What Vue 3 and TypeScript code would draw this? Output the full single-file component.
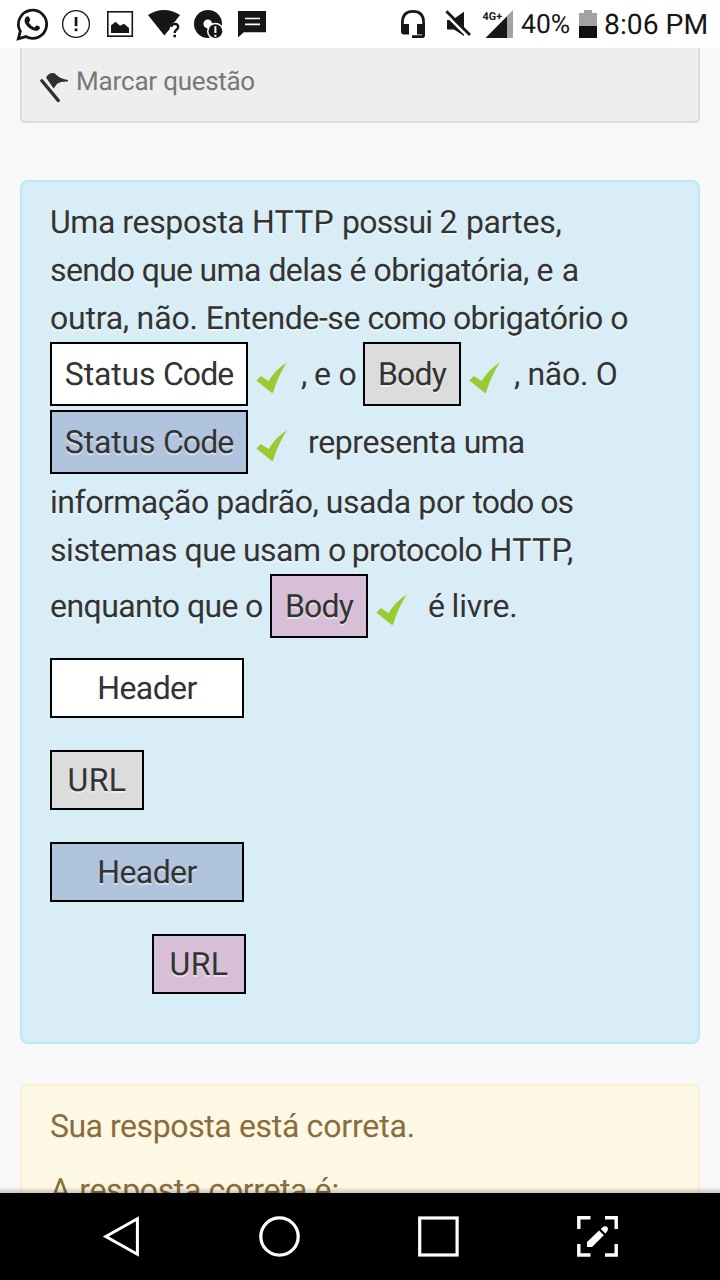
<script setup lang="ts">
import { defineComponent, h } from 'vue'

interface Choice {
  words: Word[]
  tone: string
  size: string
}

// A word (with its trailing space) and the advance it takes on the line.
type Word = [text: string, advance: number]

const pen = document.createElement('canvas').getContext('2d')!

function natural(text: string, size: number): number {
  pen.font = `${size}px Roboto, "Liberation Sans", sans-serif`
  return pen.measureText(text).width
}

// Sets each word to its advance by spreading the difference over its letters.
const Words = defineComponent({
  props: { words: { type: Array, required: true }, size: { type: Number, default: 32 } },
  setup(props) {
    return () =>
      h(
        'span',
        { style: { whiteSpace: 'pre' } },
        (props.words as Word[]).map(([text, advance]) =>
          h(
            'span',
            {
              style: {
                display: 'inline-block',
                textAlign: 'left',
                width: `${advance}px`,
                letterSpacing: `${((advance - natural(text, props.size)) / text.length).toFixed(3)}px`,
              },
            },
            text,
          ),
        ),
      )
  },
})

const intro: Word[][] = [
  [['Uma ', 72.3], ['resposta ', 129.7], ['HTTP ', 90.1], ['possui ', 97.5], ['2 ', 26.3], ['partes,', 95.6]],
  [['sendo ', 91.8], ['que ', 57.7], ['uma ', 68.9], ['delas ', 81], ['é ', 24], ['obrigatória, ', 163], ['e ', 25.4], ['a', 17]],
  [['outra, ', 86.6], ['não. ', 69.2], ['Entende-se ', 161.8], ['como ', 85.3], ['obrigatório ', 157.4], ['o', 17.7]],
]
const middle: Word[][] = [
  [['informação ', 166.2], ['padrão, ', 109.5], ['usada ', 92.5], ['por ', 54.3], ['todo ', 67.8], ['os', 32.7]],
  [['sistemas ', 134.6], ['que ', 58.4], ['usam ', 84.9], ['o ', 23.8], ['protocolo ', 137.8], ['HTTP,', 84.1]],
]
const statusCode: Word[] = [['Status ', 98.2], ['Code', 70.2]]
const body: Word[] = [['Body', 68]]
const joint: Word[] = [[', ', 13.1], ['e ', 24.3], ['o', 18]]
const notO: Word[] = [[', ', 13.4], ['não. ', 68.4], ['O', 21.5]]
const represents: Word[] = [['representa ', 155.8], ['uma', 60.5]]
const meanwhile: Word[] = [['enquanto ', 136.9], ['que ', 58.1], ['o', 18]]
const free: Word[] = [['é ', 23.6], ['livre.', 66]]
const header: Word[] = [['Header', 99.5]]
const url: Word[] = [['URL', 59]]

const choices: Choice[] = [
  { words: header, tone: 'white', size: 'wide' },
  { words: url, tone: 'grey', size: 'narrow' },
  { words: header, tone: 'blue', size: 'wide' },
  { words: url, tone: 'pink', size: 'narrow shifted' },
]

const feedback: Word[][] = [
  [['Sua ', 59.9], ['resposta ', 129], ['está ', 67.7], ['correta.', 108.4]],
  [['A ', 29.2], ['resposta ', 129.4], ['correta ', 106], ['é:', 24.4]],
]
const mark: Word[] = [['Marcar ', 87.3], ['questão', 91.5]]

const tick = 'M0.3 18.6 L4.9 14 L12.6 19 Q19.5 7.5 31 0.3 Q22 14 17 30.7 H15.6 Z'
</script>

<template>
  <div class="screen">
    <header class="status">
      <svg class="left-icons" width="280" height="48" viewBox="0 0 280 48">
        <g fill="none" stroke="#161616">
          <path d="M18.3 38.8 L20.3 31.2 A14.1 14.1 0 1 1 25.8 36.6 Z" stroke-width="2.8" />
          <circle cx="76" cy="24" r="13.4" stroke-width="1.3" />
          <rect x="107.8" y="11.8" width="24.5" height="24.4" stroke-width="1.6" />
        </g>
        <g fill="#161616">
          <path d="M24.7 19.5 Q25.3 16.6 27.5 16.2 Q28.5 16 29.1 17.3 L30.2 19.8 Q30.5 20.6 28.7 22.6 Q30.8 26.2 34.5 27.6 L36.4 25.6 Q37 25.2 39.7 26.8 Q40.3 27.5 39.5 29 Q37.9 31.2 35.3 30.8 Q28.3 29.1 25 22.9 Q24.3 21.3 24.7 19.5 Z" />
          <rect x="74.7" y="17" width="2.7" height="9.2" />
          <rect x="74.7" y="28.4" width="2.7" height="2.8" />
          <path d="M111 33 V25.5 L115.5 21.8 L120 25.8 L124 23.8 L129 28 V33 Z" />
          <path d="M148 15 Q164 5 180 15 L174.6 22 Q169.6 24.2 169.8 29 L164.3 35.4 Z" />
          <circle cx="208" cy="24" r="14" />
          <path d="M238 11 H266 V32.3 H243.8 L238 37.5 Z" />
        </g>
        <path d="M171.3 27 Q171.5 23.9 174.8 23.9 Q178.2 24 178.2 27 Q178.2 28.7 176.2 30.1 Q174.7 31.2 174.7 33" fill="none" stroke="#161616" stroke-width="2.4" />
        <rect x="173.4" y="34.7" width="2.6" height="2.6" fill="#161616" />
        <circle cx="207.8" cy="23.8" r="4.4" fill="#fff" />
        <circle cx="215.4" cy="31.2" r="8.4" fill="#fff" />
        <circle cx="215.4" cy="31.2" r="6.9" fill="#161616" />
        <path d="M215.4 26.3 V33 M215.4 34.8 V36.8" stroke="#fff" stroke-width="2" />
        <path d="M245 18.5 H260 M245 24.3 H260" stroke="#fff" stroke-width="1.7" />
      </svg>
      <svg class="right-icons" width="114" height="48" viewBox="400 0 114 48">
        <path d="M402.4 26 V22 Q402.6 11.4 413 11.3 Q423.5 11.4 423.6 22 V35.2 Q423.6 36.7 422 36.7 H412" fill="none" stroke="#161616" stroke-width="2.7" />
        <path d="M401 24 H409 V34.5 H404 Q401 34.5 401 31.5 Z M417 24 H425 V34.5 H417 Z" fill="#161616" />
        <path d="M447 20 H452.3 L464 11.7 V36 L454 29.5 H447 Z" fill="#161616" />
        <path d="M444.5 13.2 L468.2 36.9" stroke="#fff" stroke-width="2.7" />
        <path d="M446.4 11.3 L470 34.9" stroke="#161616" stroke-width="2.8" />
        <path d="M507 16 L513 10 V38 H507 Z" fill="#a3a3a3" />
        <path d="M485.5 38 L507 16.2 V38 Z" fill="#161616" />
        <text class="network" x="482.6" y="19.8" textLength="19.5" lengthAdjust="spacingAndGlyphs">4G+</text>
      </svg>
      <span class="percent">40%</span>
      <svg class="battery" width="18" height="28" viewBox="0 0 18 28">
        <path d="M0 3 H5 V0 H13 V3 H18 V16 H0 Z" fill="#a3a3a3" />
        <path d="M0 16 H18 V28 H0 Z" fill="#111" />
      </svg>
      <span class="clock">8:06 PM</span>
    </header>

    <main class="page">
      <section class="info">
        <svg class="flag" width="30" height="34" viewBox="0 0 30 34">
          <path d="M1.9 11.8 L18.2 31.4" fill="none" stroke="#303030" stroke-width="3.3" stroke-linecap="round" />
          <path d="M6 8.5 Q9.5 3 14.5 4.3 Q20.5 10.5 28 11 V12.5 Q21 12.3 17.2 14.8 L13.6 19.5 Z" fill="#303030" />
        </svg>
        <span class="mark"><Words :words="mark" :size="26" /></span>
      </section>

      <section class="question">
        <p v-for="(line, i) in intro" :key="i" class="line"><Words :words="line" /></p>
        <div class="row">
          <span class="drop code white"><Words :words="statusCode" /></span>
          <svg class="tick" width="32" height="32" viewBox="0 0 32 32"><path :d="tick" /></svg>
          <span class="joint"><Words :words="joint" /></span>
          <span class="drop body grey"><Words :words="body" /></span>
          <svg class="tick" width="32" height="32" viewBox="0 0 32 32"><path :d="tick" /></svg>
          <span class="after-comma"><Words :words="notO" /></span>
        </div>
        <div class="row">
          <span class="drop code blue"><Words :words="statusCode" /></span>
          <svg class="tick" width="32" height="32" viewBox="0 0 32 32"><path :d="tick" /></svg>
          <span class="after-word"><Words :words="represents" /></span>
        </div>
        <p v-for="(line, i) in middle" :key="i" class="line"><Words :words="line" /></p>
        <div class="row">
          <span class="lead"><Words :words="meanwhile" /></span>
          <span class="drop body pink"><Words :words="body" /></span>
          <svg class="tick" width="32" height="32" viewBox="0 0 32 32"><path :d="tick" /></svg>
          <span class="after-word"><Words :words="free" /></span>
        </div>
        <div class="choices">
          <span v-for="(choice, i) in choices" :key="i" class="choice" :class="[choice.tone, choice.size]"><Words :words="choice.words" /></span>
        </div>
      </section>

      <section class="feedback">
        <p v-for="(line, i) in feedback" :key="i"><Words :words="line" /></p>
      </section>
      <div class="fade"></div>
    </main>

    <nav class="nav">
      <svg width="720" height="87" viewBox="0 1193 720 87" fill="none" stroke="#fff">
        <path d="M105.8 1236.5 L137.4 1218.8 V1254.2 Z" stroke-width="3" />
        <circle cx="279.5" cy="1236.5" r="18.7" stroke-width="3.2" />
        <rect x="419.7" y="1218" width="37.4" height="37" stroke-width="3.2" />
        <path d="M578.8 1229 V1217.8 H590.5 M605 1217.8 H616.2 V1229 M578.8 1244 V1255 H590.5 M605 1255 H616.2 V1244" stroke-width="3.4" />
        <path d="M587 1247 V1242 L599 1230.5 L603.8 1235.3 L592 1247 Z M600.7 1229 L603.3 1226.8 Q605.5 1225.3 607.4 1227.3 Q609 1229.5 607.3 1231.3 L605.4 1233.6 Z" fill="#fff" stroke="none" />
      </svg>
    </nav>
  </div>
</template>

<style>
body {
  margin: 0;
  background: #f8f8f8;
}
</style>

<style scoped>
.screen {
  display: flex;
  flex-direction: column;
  width: 720px;
  height: 1280px;
  overflow: hidden;
  background: #f8f8f8;
  font-family: Roboto, "Liberation Sans", sans-serif;
  font-size: 32px;
  text-rendering: geometricPrecision;
  color: #333;
}
.status {
  display: flex;
  align-items: center;
  flex: 0 0 48px;
  height: 48px;
  background: #fff;
  color: #161616;
  white-space: nowrap;
}
.right-icons {
  margin-left: 120px;
}
.network {
  font: 700 11px Roboto, sans-serif;
  fill: #161616;
}
.percent {
  width: 58px;
  padding-left: 7px;
  box-sizing: border-box;
  font-size: 26.5px;
  line-height: 50px;
  margin-top: 2px;
}
.battery {
  margin-left: 7px;
}
.clock {
  margin: 2px 0 0 7px;
  font-size: 28.3px;
  line-height: 50px;
}
.page {
  position: relative;
  flex: 0 0 1145px;
  height: 1145px;
  padding: 0 20px;
  box-sizing: border-box;
  overflow: hidden;
}
.info {
  display: flex;
  height: 75px;
  padding: 21px 18px 0;
  box-sizing: border-box;
  border: 2px solid #dcdcdc;
  border-top: 0;
  border-radius: 0 0 5px 5px;
  background: #eee;
}
.flag {
  flex: none;
}
.mark {
  margin: -7px 0 0 6px;
  font-size: 26px;
  line-height: 40px;
  color: #777;
}
.question {
  height: 864px;
  margin-top: 57px;
  padding: 16px 28px 0;
  box-sizing: border-box;
  border: 2px solid #bce8f1;
  border-radius: 8px;
  background: #d9edf7;
  text-shadow: 0 2px 0 rgba(255, 255, 255, 0.5);
  white-space: nowrap;
}
.line {
  margin: 0;
  line-height: 48px;
}
.row {
  display: flex;
  height: 68px;
  line-height: 64px;
}
.drop {
  box-sizing: border-box;
  height: 64px;
  border: 2px solid #000;
  line-height: 60px;
  text-align: center;
}
.code {
  width: 198px;
}
.body {
  width: 98px;
}
.tick {
  flex: none;
  margin: 20px 0 0 8px;
  fill: #9c3;
}
.joint {
  width: 62px;
  margin-left: 13px;
}
.after-comma {
  margin-left: 13px;
}
.after-word {
  margin-left: 20px;
}
.lead {
  width: 220px;
}
.white {
  background: #fff;
}
.grey {
  background: #dcdcdc;
}
.blue {
  background: #b0c4de;
}
.pink {
  background: #d8bfd8;
}
.choices {
  display: flex;
  flex-direction: column;
  gap: 32px;
  margin-top: 16px;
}
.choice {
  box-sizing: border-box;
  height: 60px;
  border: 2px solid #000;
  line-height: 56px;
  text-align: center;
}
.wide {
  width: 194px;
}
.narrow {
  width: 94px;
}
.shifted {
  margin-left: 102px;
}
.feedback {
  height: 240px;
  margin-top: 40px;
  padding: 16px 28px 0;
  box-sizing: border-box;
  border: 2px solid #fbeed5;
  border-radius: 8px;
  background: #fcf8e3;
  color: #8a6d3b;
}
.feedback p {
  margin: 0 0 16px;
  line-height: 48px;
}
.fade {
  position: absolute;
  right: 0;
  bottom: 0;
  left: 0;
  height: 6px;
  background: linear-gradient(rgba(0, 0, 0, 0), rgba(0, 0, 0, 0.2));
}
.nav {
  flex: 0 0 87px;
  background: #000;
}
.nav svg {
  display: block;
}
</style>
